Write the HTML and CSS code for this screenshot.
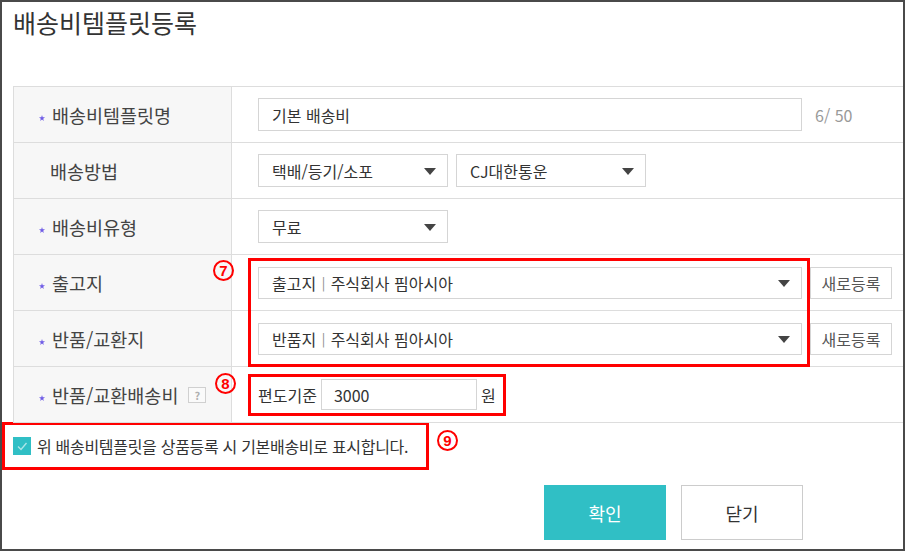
FILE: index.html
```html
<!DOCTYPE html>
<html lang="ko">
<head>
<meta charset="utf-8">
<title>배송비템플릿등록</title>
<link rel="stylesheet" href="styles.css">
</head>
<body>
<div class="frame">
  <h1 class="title">배송비템플릿등록</h1>
  <div class="table">
    <div class="row">
      <div class="th"><span class="req"><svg width="6" height="6" viewBox="0 0 10 10"><polygon points="5,0 6.2,3.6 10,3.8 7,6.1 8.1,9.8 5,7.7 1.9,9.8 3,6.1 0,3.8 3.8,3.6" fill="#6f5ce6"/></svg></span>배송비템플릿명</div>
      <div class="td"><div class="field wide">기본 배송비</div><span class="count">6/ 50</span></div>
    </div>
    <div class="row">
      <div class="th plain">배송방법</div>
      <div class="td"><div class="field select">택배/등기/소포</div><div class="field select">CJ대한통운</div></div>
    </div>
    <div class="row">
      <div class="th"><span class="req"><svg width="6" height="6" viewBox="0 0 10 10"><polygon points="5,0 6.2,3.6 10,3.8 7,6.1 8.1,9.8 5,7.7 1.9,9.8 3,6.1 0,3.8 3.8,3.6" fill="#6f5ce6"/></svg></span>배송비유형</div>
      <div class="td"><div class="field select">무료</div></div>
    </div>
    <div class="row">
      <div class="th"><span class="req"><svg width="6" height="6" viewBox="0 0 10 10"><polygon points="5,0 6.2,3.6 10,3.8 7,6.1 8.1,9.8 5,7.7 1.9,9.8 3,6.1 0,3.8 3.8,3.6" fill="#6f5ce6"/></svg></span>출고지</div>
      <div class="td"><div class="field select wide short">출고지&nbsp;<span class="sep">|</span>&nbsp;주식회사 핌아시아</div><button class="btn-sm">새로등록</button></div>
    </div>
    <div class="row">
      <div class="th"><span class="req"><svg width="6" height="6" viewBox="0 0 10 10"><polygon points="5,0 6.2,3.6 10,3.8 7,6.1 8.1,9.8 5,7.7 1.9,9.8 3,6.1 0,3.8 3.8,3.6" fill="#6f5ce6"/></svg></span>반품/교환지</div>
      <div class="td"><div class="field select wide short">반품지&nbsp;<span class="sep">|</span>&nbsp;주식회사 핌아시아</div><button class="btn-sm">새로등록</button></div>
    </div>
    <div class="row">
      <div class="th"><span class="req"><svg width="6" height="6" viewBox="0 0 10 10"><polygon points="5,0 6.2,3.6 10,3.8 7,6.1 8.1,9.8 5,7.7 1.9,9.8 3,6.1 0,3.8 3.8,3.6" fill="#6f5ce6"/></svg></span>반품/교환배송비<span class="help">?</span></div>
      <div class="td">
        <div class="fee"><span>편도기준</span><div class="field fee-input">3000</div><span>원</span></div>
      </div>
    </div>
    <div class="mark box7"></div>
    <span class="num n7">7</span>
    <span class="num n8">8</span>
  </div>
  <div class="check-row">
    <div class="check-box">
      <svg class="cb" width="18" height="18" viewBox="0 0 18 18"><rect width="18" height="18" fill="#30bfc5"/><path d="M5 9.5 L8 12.5 L13.5 6" fill="none" stroke="#ffffff" stroke-opacity="0.6" stroke-width="1.4"/></svg>
      <span>위 배송비템플릿을 상품등록 시 기본배송비로 표시합니다.</span>
    </div>
    <span class="num n9">9</span>
  </div>
  <div class="buttons">
    <button class="btn primary">확인</button>
    <button class="btn">닫기</button>
  </div>
</div>
</body>
</html>
```

FILE: styles.css
```css
* { box-sizing: border-box; }

body {
  margin: 0;
  background: #fff;
  font-family: "Noto Sans CJK KR", "Noto Sans", sans-serif;
  color: #333;
}

.frame {
  width: 905px;
  height: 551px;
  border: 2px solid #4a4a4a;
  display: flex;
  flex-direction: column;
}

.title {
  margin: 0;
  padding: 3px 0 0 11px;
  font-size: 25px;
  font-weight: 400;
  line-height: 34px;
  color: #333;
}

.table {
  position: relative;
  margin: 47px 0 0 11px;
  border-top: 1px solid #ddd;
  border-left: 1px solid #ddd;
}

.row {
  display: grid;
  grid-template-columns: 217px 1fr;
  height: 56px;
  border-bottom: 1px solid #ddd;
}

.th {
  background: #f7f7f7;
  display: flex;
  align-items: center;
  padding-left: 25px;
  font-size: 18.5px;
  color: #444;
}

.th.plain { padding-left: 36px; }

.req {
  display: inline-flex;
  width: 6px;
  height: 6px;
  margin-right: 7px;
  margin-top: 6px;
}

.help {
  display: inline-flex;
  justify-content: center;
  align-items: center;
  width: 18px;
  height: 16px;
  margin-left: 10px;
  border: 1px solid #d0d0d0;
  background: #fafafa;
  color: #b0b0b0;
  font-size: 11px;
  font-weight: 700;
}

.td {
  border-left: 1px solid #ddd;
  display: flex;
  align-items: center;
  padding-left: 26px;
  gap: 8px;
}

.field {
  position: relative;
  height: 33px;
  border: 1px solid #d5d5d5;
  background: #fff;
  display: flex;
  align-items: center;
  padding-left: 13px;
  font-size: 16px;
  color: #333;
  white-space: pre;
}

.sep {
  color: #888;
  font-size: 13px;
  padding: 0 1px;
}

.select { width: 190px; }
.wide { width: 544px; }
.short { height: 32px; }

.select::after {
  content: "";
  position: absolute;
  right: 11px;
  top: 50%;
  margin-top: -3px;
  border-left: 6px solid transparent;
  border-right: 6px solid transparent;
  border-top: 7px solid #444;
}

.count {
  margin-left: 5px;
  font-size: 16px;
  color: #999;
}

.btn-sm {
  width: 82px;
  height: 32px;
  border: 1px solid #d5d5d5;
  background: #fff;
  font-family: inherit;
  font-size: 16px;
  color: #555;
  padding: 0;
}

.fee {
  display: flex;
  align-items: center;
  gap: 4px;
  height: 42px;
  margin-left: -10px;
  padding: 0 7px;
  border: 3px solid #f00;
  font-size: 16px;
  color: #333;
}

.fee-input {
  width: 156px;
  height: 31px;
  padding-left: 12px;
}

.mark {
  position: absolute;
  border: 3px solid #f00;
}

.box7 {
  left: 234px;
  top: 171px;
  width: 562px;
  height: 109px;
}

.num {
  display: inline-flex;
  justify-content: center;
  align-items: center;
  width: 21px;
  height: 21px;
  border: 2px solid #f00;
  border-radius: 50%;
  color: #f00;
  font-size: 15px;
  font-weight: 700;
  line-height: 1;
  font-family: "Liberation Sans", sans-serif;
}

.n7 { position: absolute; left: 199px; top: 173px; }
.n8 { position: absolute; left: 201px; top: 286px; }

.check-row {
  display: flex;
  align-items: flex-start;
  margin-top: -1px;
}

.check-box {
  width: 427px;
  height: 48px;
  border: 3px solid #f00;
  display: flex;
  align-items: center;
  gap: 6px;
  padding-left: 8px;
  font-size: 16px;
  letter-spacing: -0.3px;
  color: #333;
}

.cb { flex: none; }

.n9 {
  margin-left: 8px;
  margin-top: 8px;
}

.buttons {
  display: flex;
  gap: 15px;
  margin-top: 15px;
  padding-left: 542px;
}

.btn {
  width: 122px;
  height: 55px;
  border: 1px solid #ccc;
  background: #fff;
  font-family: inherit;
  font-size: 18px;
  color: #333;
  padding: 0;
}

.btn.primary {
  background: #30bfc5;
  border-color: #30bfc5;
  color: #fff;
}
```
